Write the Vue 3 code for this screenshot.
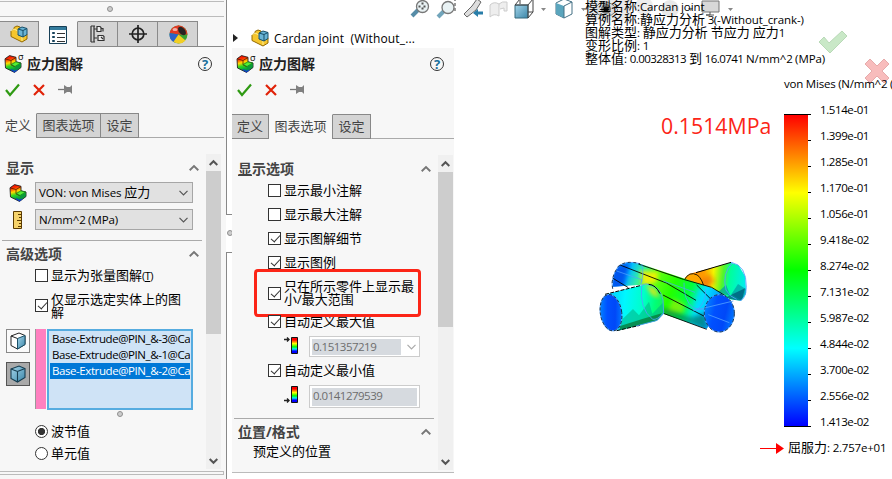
<script setup>
const treeTabs = ['part', 'list', 'config', 'target', 'ball']
const pages = ['定义', '图表选项', '设定']
const entities = ['Base-Extrude@PIN_&-3@Ca', 'Base-Extrude@PIN_&-1@Ca', 'Base-Extrude@PIN_&-2@Ca']
const options = [
  { text: '显示最小注解', on: false },
  { text: '显示最大注解', on: false },
  { text: '显示图解细节', on: true },
  { text: '显示图例', on: true }
]
const legend = ['1.514e-01', '1.399e-01', '1.285e-01', '1.170e-01', '1.056e-01', '9.418e-02', '8.274e-02', '7.131e-02', '5.987e-02', '4.844e-02', '3.700e-02', '2.556e-02', '1.413e-02']
const info = ['模型名称:Cardan joint', '算例名称:静应力分析 3(-Without_crank-)', '图解类型: 静应力分析 节应力 应力1', '变形比例: 1', '整体值: 0.00328313 到 16.0741 N/mm^2 (MPa)']

// Splits mixed text so that Han characters, numbers and Latin each get their own size.
const runs = (text) => (text.match(/[\u4e00-\u9fff]+|[\d.]+|[^\u4e00-\u9fff\d.]+/g) || []).map((t) => ({
  t,
  kind: /[\u4e00-\u9fff]/.test(t) ? 'han' : /\d/.test(t) ? 'num' : 'lat'
}))
</script>

<template>
  <div class="app">
    <svg class="defs" width="0" height="0">
      <defs>
        <linearGradient id="rain" gradientUnits="userSpaceOnUse" x1="4" y1="0" x2="9" y2="18">
          <stop offset="0" stop-color="#e80000" /><stop offset=".22" stop-color="#ff3000" /><stop offset=".42" stop-color="#ffd800" /><stop offset=".6" stop-color="#30d820" /><stop offset=".82" stop-color="#00a040" /><stop offset="1" stop-color="#0040d0" />
        </linearGradient>
        <linearGradient id="bar" x1="0" y1="0" x2="0" y2="1">
          <stop offset="0" stop-color="#f00" /><stop offset=".15" stop-color="#f00" /><stop offset=".38" stop-color="#ff0" /><stop offset=".58" stop-color="#0f0" /><stop offset=".72" stop-color="#0ef" /><stop offset=".85" stop-color="#00f" /><stop offset="1" stop-color="#00f" />
        </linearGradient>
        <linearGradient id="blue" x1="0" y1="0" x2="1" y2="1">
          <stop offset="0" stop-color="#a5d5ea" /><stop offset="1" stop-color="#3b86a8" />
        </linearGradient>
        <symbol id="stress" viewBox="0 0 18 18">
          <path d="M1 3.800 5.500.600 12 2.300V6.800L17 8v4.500L10.500 17.400 1.500 13Z" fill="url(#rain)" stroke="#222" stroke-width=".9" />
          <path d="M1.500 4 7 5.500 12 2.500M7 5.500V9.800L11 11.800" fill="none" stroke="#5a1a00" stroke-width=".8" />
          <path d="m7.300 9.500 4.500-2.600L16.500 8 11 11.500Z" fill="#54f035" stroke="#117a18" stroke-width=".7" />
          <path d="M11 12 16.600 8.500V12.200L10.700 16.800Z" fill="#0b9a3a" />
          <path d="M7 14.500 10.500 16.800 13 15" fill="none" stroke="#1240c8" stroke-width="1.300" />
        </symbol>
        <symbol id="part" viewBox="0 0 18 18">
          <path d="M1 6 4 4V2.500L7 1l3 1v4l7 3v5l-5 3L1 11.500Z" fill="#f5c62d" stroke="#946a00" />
          <path d="m1 6 3-2 4 2v3l4 2v5" fill="none" stroke="#fff09a" />
          <path d="M8 4 12 2l5 1.500v6L13 12 8 10Z" fill="#69b4d5" stroke="#164e69" />
          <path d="M8 4 13 5.500 17 3.500M13 5.500V12" fill="none" stroke="#164e69" />
        </symbol>
        <symbol id="cube" viewBox="0 0 18 18">
          <path d="M2 4 10 1l6 2.500v9L8.500 17 2 13.500Z" fill="url(#blue)" stroke="#163d50" stroke-width="1.100" />
          <path d="m2 4 6.500 2.500L16 3.500M8.500 6.500V17" fill="none" stroke="#163d50" stroke-width="1.100" />
        </symbol>
      </defs>
    </svg>

    <aside class="left">
      <header class="grip"><i class="dot"></i></header>
      <nav class="treetabs">
        <div v-for="t in treeTabs" :key="t" class="treetab" :class="{ active: t === 'list' }">
          <svg v-if="t === 'part'" width="18" height="18"><use href="#part" /></svg>
          <svg v-else-if="t === 'list'" width="18" height="18" viewBox="0 0 18 18">
            <path d="M.5.500h17v17H.5Z" fill="#fff" stroke="#173f56" /><path d="M1 1h16v3H1Z" fill="#337b9c" />
            <g fill="#70b9d6" stroke="#173f56"><path d="M3.500 6.500h2v1h-2ZM3.500 10.500h2v1h-2ZM3.500 14.500h2v1h-2Z" /></g>
            <path d="M8 7.500h8M8 11.500h8M8 15.500h8" stroke="#333" />
          </svg>
          <svg v-else-if="t === 'config'" width="16" height="18" viewBox="0 0 16 18" fill="none" stroke="#333" stroke-width="1.200">
            <path d="M1 1h4M1 17h4M1 1v16M4 1v16M4 4h3M4 13h3" /><path d="M7 1.500h3l1 1v4H7ZM8 10.500h5l1 1v4H8Z" fill="#eee" /><path d="M11 3.500h2v3M11 12l2 2" />
          </svg>
          <svg v-else-if="t === 'target'" width="18" height="18" viewBox="0 0 18 18" fill="none" stroke="#222" stroke-width="1.700">
            <circle cx="9" cy="9" r="5.800" /><path d="M9 0v18M0 9h18" />
          </svg>
          <svg v-else width="19" height="19" viewBox="0 0 19 19">
            <circle cx="9.500" cy="9.500" r="9" fill="#39a332" /><path d="M9.500 9.500.6 8A9 9 0 0 1 10 .500Z" fill="#e23a25" /><path d="M9.500 9.500.6 8a9 9 0 0 0 5 9.500Z" fill="#2a62c9" /><path d="m9.500 9.500-5 7.300a9 9 0 0 0 12-1.300Z" fill="#f2ce24" /><path d="M9 .5a9 9 0 0 1 9.500 9l-9 0Z" fill="#d83b22" /><ellipse cx="13" cy="6" rx="3" ry="5" transform="rotate(-40 13 6)" fill="#272323" /><ellipse cx="6" cy="4.500" rx="2.500" ry="1.500" fill="#fff" opacity=".6" />
          </svg>
        </div>
        <span class="rest"></span>
      </nav>
      <div class="title">
        <svg width="18" height="18"><use href="#stress" /></svg><sup>σ</sup><b>应力图解</b><span class="help">?</span>
      </div>
      <div class="actions">
        <svg width="70" height="14" viewBox="0 0 70 14" fill="none"><path d="m1 7 4 5L14 1.500" stroke="#2f9a13" stroke-width="2.200" /><path d="m29 2 10 10M39 2 29 12" stroke="#e02208" stroke-width="2.200" /><path d="M53 6.500h6" stroke="#777" stroke-width="1.300" /><path d="M59 2v9l3-2h3l2 2V2l-2 2h-3Z" fill="#808080" /></svg>
      </div>
      <nav class="pages"><span v-for="(p, i) in pages" :key="p" :class="{ on: i === 0 }">{{ p }}</span><i></i></nav>
      <div class="scrollarea">
        <div class="content">
          <h3 class="h-show">显示<svg class="chev" width="10" height="6" viewBox="0 0 10 6"><path d="m.7 5.300 4.300-4.200 4.300 4.200" /></svg></h3>
          <div class="combo-row"><svg width="18" height="18"><use href="#stress" /></svg>
            <div class="combo"><div><span v-for="(r, i) in runs('VON: von Mises 应力')" :key="i" :class="r.kind">{{ r.t }}</span></div><svg width="9" height="6" viewBox="0 0 9 6"><path d="m.5.800 4 4 4-4" /></svg></div></div>
          <div class="combo-row second"><svg width="18" height="18" viewBox="0 0 18 18"><path d="M4.500.500h8v17h-8Z" fill="#f6d36b" stroke="#5b3b00" /><path d="M9 3.500h3M10 6.500h2M8 9.500h4M10 12.500h2M9 15.500h3" stroke="#5b3b00" /></svg>
            <div class="combo"><div><span v-for="(r, i) in runs('N/mm^2 (MPa)')" :key="i" :class="r.kind">{{ r.t }}</span></div><svg width="9" height="6" viewBox="0 0 9 6"><path d="m.5.800 4 4 4-4" /></svg></div></div>
          <hr>
          <h3 class="h-adv">高级选项<svg class="chev" width="10" height="6" viewBox="0 0 10 6"><path d="m.7 5.300 4.300-4.200 4.300 4.200" /></svg></h3>
          <label class="opt tensor"><span class="box"></span><span>显示为张量图解<small>(<u>T</u>)</small></span></label>
          <label class="opt bodies"><span class="box on"></span><span>仅显示选定实体上的图<br>解</span></label>
          <div class="picker">
            <div class="filters">
              <span><svg width="18" height="18" viewBox="0 0 18 18"><path d="M2 4 10 1l6 2.500v9L8.500 17 2 13.500Z" fill="#fff" stroke="#222" /><path d="M8.500 6.500 16 3.500v9L8.500 17Z" fill="url(#blue)" stroke="#1b5068" /><path d="m2 4 6.500 2.500" stroke="#222" /></svg></span>
              <span class="pressed"><svg width="18" height="18"><use href="#cube" /></svg></span>
            </div>
            <div class="pink"></div>
            <div class="list"><div v-for="(e, i) in entities" :key="e" :class="{ sel: i === 2 }">{{ e }}</div></div>
          </div>
          <div class="resize"><i class="dot"></i></div>
          <label class="radio"><i class="on"></i>波节值</label>
          <label class="radio"><i></i>单元值</label>
        </div>
        <div class="scroll"><svg width="9" height="6" viewBox="0 0 9 6"><path d="m.7 5 3.800-3.800L8.300 5" /></svg><div class="thumb"></div><svg class="down" width="9" height="6" viewBox="0 0 9 6"><path d="m.7 1 3.800 3.800L8.300 1" /></svg></div>
      </div>
      <footer class="foot"></footer>
    </aside>

    <div class="strip"><div class="seg-a"></div><i class="dot"></i><div class="seg-b"></div></div>

    <section class="middle">
      <div class="flyout"><svg class="tri" width="5" height="8" viewBox="0 0 5 8"><path d="m0 0 5 4-5 4Z" fill="#222" /></svg><svg width="18" height="18"><use href="#part" /></svg><span>Cardan joint&nbsp; (Without_...</span></div>
      <div class="panel">
        <div class="title">
          <svg width="18" height="18"><use href="#stress" /></svg><sup>σ</sup><b>应力图解</b><span class="help">?</span>
        </div>
        <div class="actions">
          <svg width="70" height="14" viewBox="0 0 70 14" fill="none"><path d="m1 7 4 5L14 1.500" stroke="#2f9a13" stroke-width="2.200" /><path d="m29 2 10 10M39 2 29 12" stroke="#e02208" stroke-width="2.200" /><path d="M53 6.500h6" stroke="#777" stroke-width="1.300" /><path d="M59 2v9l3-2h3l2 2V2l-2 2h-3Z" fill="#808080" /></svg>
        </div>
        <nav class="pages"><span v-for="(p, i) in pages" :key="p" :class="{ on: i === 1 }">{{ p }}</span><i></i></nav>
        <div class="scrollarea">
          <div class="content">
            <h3 class="h-opt"><span><u>显</u>示选项</span><svg class="chev" width="10" height="6" viewBox="0 0 10 6"><path d="m.7 5.300 4.300-4.200 4.300 4.200" /></svg></h3>
            <label v-for="o in options" :key="o.text" class="opt line"><span class="box" :class="{ on: o.on }"></span>{{ o.text }}</label>
            <label class="opt range"><span class="box on"></span><span>只在所示零件上显示最<br>小/最大范围</span><em class="mark"></em></label>
            <label class="opt line"><span class="box on"></span>自动定义最大值</label>
            <div class="limit"><svg width="16" height="19" viewBox="0 0 16 19"><path d="M7.500 1.500h6v16h-6Z" fill="url(#bar)" stroke="#111" /><path d="M0 3.500h5M3 1.500l2 2-2 2" fill="none" stroke="#222" stroke-width="1.400" /></svg><div class="field drop"><span>0.151357219</span><svg width="9" height="6" viewBox="0 0 9 6"><path d="m.5.800 4 4 4-4" /></svg></div></div>
            <label class="opt line"><span class="box on"></span>自动定义最小值</label>
            <div class="limit low"><svg width="16" height="19" viewBox="0 0 16 19"><path d="M7.500 1.500h6v16h-6Z" fill="url(#bar)" stroke="#111" /><path d="M0 15.500h5M3 13.500l2 2-2 2" fill="none" stroke="#222" stroke-width="1.400" /></svg><div class="field"><span>0.0141279539</span></div></div>
            <hr>
            <h3 class="h-pos"><span><u>位</u>置/格式</span><svg class="chev" width="10" height="6" viewBox="0 0 10 6"><path d="m.7 5.300 4.300-4.200 4.300 4.200" /></svg></h3>
            <p>预定义的位置</p>
          </div>
          <div class="scroll"><svg width="9" height="6" viewBox="0 0 9 6"><path d="m.7 5 3.800-3.800L8.300 5" /></svg><div class="thumb"></div><svg class="down" width="9" height="6" viewBox="0 0 9 6"><path d="m.7 1 3.800 3.800L8.300 1" /></svg></div>
        </div>
      </div>
    </section>

    <main class="view">
      <div class="info"><div v-for="t in info" :key="t"><span v-for="(r, i) in runs(t)" :key="i" :class="r.kind">{{ r.t }}</span></div></div>
      <div class="stage">
        <div class="scene">
          <div class="value">0.1514MPa</div>
          <svg class="model" width="170" height="90" viewBox="0 0 510 270">
            <defs>
              <linearGradient id="gr" x1="0" y1=".2" x2="1" y2=".3"><stop offset="0" stop-color="#ffb000" /><stop offset=".18" stop-color="#ff8a00" /><stop offset=".35" stop-color="#ffa000" /><stop offset=".48" stop-color="#f5f500" /><stop offset=".62" stop-color="#52f52b" /><stop offset=".72" stop-color="#00ff9c" /><stop offset="1" stop-color="#00e8ff" /></linearGradient>
              <linearGradient id="gl" gradientUnits="userSpaceOnUse" x1="70" y1="70" x2="385" y2="205"><stop offset="0" stop-color="#006fff" /><stop offset=".12" stop-color="#00bcff" /><stop offset=".22" stop-color="#37f0a0" /><stop offset=".34" stop-color="#6cff18" /><stop offset=".53" stop-color="#24ff00" /><stop offset=".68" stop-color="#00ff40" /><stop offset=".8" stop-color="#00e4ff" /><stop offset="1" stop-color="#0080ff" /></linearGradient>
              <linearGradient id="gf" x1="0" y1="0" x2="1" y2=".1"><stop offset="0" stop-color="#00bcff" /><stop offset=".35" stop-color="#00f7ff" /><stop offset=".65" stop-color="#00ffc8" /><stop offset=".85" stop-color="#00ff76" /><stop offset="1" stop-color="#17ef56" /></linearGradient>
              <linearGradient id="end" x1="0" y1=".3" x2="1" y2=".6"><stop offset="0" stop-color="#0088ff" /><stop offset=".35" stop-color="#0050ff" /><stop offset=".7" stop-color="#0048f8" /><stop offset="1" stop-color="#0078ff" /></linearGradient>
              <filter id="soft"><feGaussianBlur stdDeviation="7" /></filter>
              <clipPath id="cr"><path d="M283 85 300 71 420 38 445 45 465 78 469 130 453 152 340 138 315 178 285 130Z" /></clipPath>
              <clipPath id="cl"><path d="M68 110 72 72 88 47 115 36 150 41 365 113 410 139 350 237 220 191 155 104Z" /></clipPath>
              <clipPath id="cf"><path d="M48 133 150 107 178 102 202 114 220 150 221 191 200 212 80 243 95 190 78 143Z" /></clipPath>
            </defs>
            <g clip-path="url(#cr)">
              <path d="M270 25h210v160H270Z" fill="url(#gr)" /><path d="M357 70 376 92 345 125 335 92Z" fill="#f04a10" opacity=".5" filter="url(#soft)" /><path d="m385 126 23-22 14 35ZM424 133l20-31 24 16v42Z" fill="#009ca2" opacity=".7" /><path d="m405 143 60-28-10 40Z" fill="#004a72" opacity=".65" />
            </g>
            <path d="M318 68 423 37" fill="none" stroke="#000" stroke-width="3" />
            <path d="M423 37Q470 45 469 112 467 148 450 152M428 38Q395 70 408 120 418 140 440 148" fill="none" stroke="#50a0ff" stroke-width="2.600" />
            <path d="M283 90Q297 62 322 75 346 97 344 145L300 130Z" fill="#ffa600" stroke="none" /><path d="M283 90Q297 62 322 75 338 88 344 120" fill="none" stroke="#000" stroke-width="2.500" />
            <g clip-path="url(#cl)">
              <path d="M60 20h360v230H60Z" fill="url(#gl)" /><path d="M65 55 120 37 100 115 65 125Z" fill="#0057ef" filter="url(#soft)" /><path d="M150 62 205 67 200 95 160 108Z" fill="#fff000" filter="url(#soft)" opacity=".9" /><path d="M250 145 286 162 278 192 231 188Z" fill="#b5ec00" filter="url(#soft)" opacity=".6" /><path d="M325 118 350 125 339 185 315 175Z" fill="#00d9ff" opacity=".7" filter="url(#soft)" /><path d="M215 172 300 202 347 190 349 238 220 194Z" fill="#006a50" opacity=".6" filter="url(#soft)" />
            </g>
            <path d="M68 116Q61 84 85 49 107 30 150 41" fill="none" stroke="#50a0ff" stroke-width="3" /><path d="M68 116Q61 84 85 49 107 30 150 41" fill="none" stroke="#000" stroke-width="2" stroke-dasharray="9 8" />
            <path d="M145 42 280 88 365 112 407 138M220 190 350 238M90 45 229 99 318 151M69 85 115 113M219 135 355 205M320 105 360 145" fill="none" stroke="#000" stroke-width="2.600" />
            <path d="M80 63 155 89Q153 146 105 149M155 43Q162 62 155 95M220 93 315 127M282 98Q280 150 310 174L340 179M347 115Q350 157 320 181" fill="none" stroke="#50a0ff" stroke-width="2.200" />
            <g clip-path="url(#cf)">
              <path d="M45 95h185v155H45Z" fill="url(#gf)" /><path d="m165 102 32 12 12 31-25-11Z" fill="#ffe500" opacity=".8" filter="url(#soft)" /><path d="m94 211 35-34 18 19 30-41 10 36 34-35v51L87 243Z" fill="#00b98b" opacity=".6" /><path d="m88 229 69-22 58-17-12 35-110 19Z" fill="#087737" opacity=".75" />
            </g>
            <path d="M45 133 150 107M80 242 150 226" fill="none" stroke="#000" stroke-width="3" stroke-dasharray="12 4" />
            <path d="M155 106Q166 98 181 104 213 114 219 150L221 190 202 211 139 228M155 106Q147 177 188 208 202 211 221 188" fill="none" stroke="#50a0ff" stroke-width="2.500" />
            <path d="M176 103Q197 104 210 131" fill="none" stroke="#000" stroke-width="3" />
            <ellipse cx="63" cy="188" rx="32" ry="55" transform="rotate(-9 63 188)" fill="url(#end)" stroke="#50a0ff" stroke-width="3" /><ellipse cx="63" cy="188" rx="32" ry="55" transform="rotate(-9 63 188)" fill="none" stroke="#000" stroke-width="2" stroke-dasharray="9 6" />
            <ellipse cx="388" cy="190" rx="45" ry="56" fill="url(#end)" stroke="#50a0ff" stroke-width="3" /><ellipse cx="388" cy="190" rx="45" ry="56" fill="none" stroke="#000" stroke-width="2" stroke-dasharray="10 7" />
            <path d="M310 182 430 153M355 194 418 218" fill="none" stroke="#50a0ff" stroke-width="2.500" />
          </svg>
        </div>
        <div class="legend">
          <div class="unit">von Mises (N/mm^2 (</div>
          <div class="scale">
            <div class="ramp"></div>
            <div class="ticks"><i v-for="l in legend" :key="l"></i></div>
            <div class="labels"><span v-for="l in legend" :key="l">{{ l }}</span></div>
          </div>
          <div class="yield"><svg width="24" height="11" viewBox="0 0 24 11"><path d="M0 5.500h17" stroke="red" /><path d="m16 0 8 5.500-8 5.500Z" fill="red" /></svg><div><span v-for="(r, i) in runs('屈服力: 2.757e+01')" :key="i" :class="r.kind">{{ r.t }}</span></div></div>
        </div>
      </div>
      <svg class="toolbar" width="330" height="20" viewBox="0 0 330 20">
        <g fill="#e9f2f4" stroke="#777" stroke-width="1.300">
          <path d="m1 16 6-6" stroke="#568ca7" stroke-width="4" /><circle cx="11.500" cy="6.500" r="6" /><path d="M11.500 2.500v8M7.500 6.500h8" stroke="#555" stroke-dasharray="2 3" stroke-width="2" />
          <path d="M28-1h16v14" fill="none" stroke-dasharray="3 2" stroke="#666" /><path d="m27 17 6-6" stroke="#72a5bb" stroke-width="4" /><circle cx="37" cy="7.500" r="6" />
        </g>
        <path d="m53 14 8-8 5-7 4 3-5 8-9 7Z" fill="#ddd" stroke="#666" /><path d="m62 13 5-4v2.500h5v3h-5V17Z" fill="#287da8" />
        <path d="M79 5q4-4 9-1v12q-5-3-9 1ZM88 4q3-3 8-2v9h-3v-3l-4 1" fill="#eee" stroke="#ccc" />
        <path d="M104 5h13v13h-13Z" fill="url(#blue)" stroke="#35687c" /><path d="m104 5 5-6h13v13l-5 6M104 5h13v13M117 5l5-6M109-1v5M117 12h5" fill="none" stroke="#444" />
        <path d="M130 8h5l-2.500 3ZM170 8h5l-2.500 3ZM237 8h5l-2.500 3ZM277 8h5l-2.500 3ZM317 8h5l-2.500 3Z" fill="#888" />
        <path d="m145 3 8-4 8 3v12l-8 4-8-4Z" fill="#fff" stroke="#447185" /><path d="m145 3 8 3v12l-8-4Z" fill="#5aa5bd" /><path d="m153 6 8-4M153 6v12" stroke="#447185" />
        <path d="M176 0h44v20h-44Z" fill="#e4e4e4" opacity=".8" /><path d="M182 10q12-16 25 0-13 13-25 0Z" fill="#ddd" stroke="#777" /><circle cx="195" cy="9" r="5" fill="#777" /><circle cx="195" cy="9" r="2.500" fill="#111" />
        <circle cx="233" cy="6" r="9" fill="#e6e6e6" opacity=".7" /><circle cx="259" cy="9" r="9" fill="#dedede" opacity=".7" /><path d="M291 1h17v11h-17Z" fill="#d8d8d8" stroke="#777" /><path d="M299 12v3h-4h8" stroke="#555" fill="none" />
      </svg>
      <svg class="confirm" width="74" height="54" viewBox="0 0 74 54"><path d="m1 12 5-5 5 6L24 1l5 5-17 17Z" fill="#c9e8c7" stroke="#b9d9b7" /><path d="m47 34 5-5 7 7 7-7 5 5-7 7 7 7-5 5-7-7-7 7-5-5 7-7Z" fill="#f8bcbc" stroke="#e6aaaa" /></svg>
    </main>
  </div>
</template>

<style>
html, body { margin: 0; overflow: hidden; }
</style>
<style scoped>
* { box-sizing: border-box; }
.app { display: flex; width: 892px; height: 479px; background: #fff; overflow: hidden; color: #000; font: 12px/16px "Open Sans", "Noto Sans CJK SC", sans-serif; white-space: nowrap; }
svg { flex: none; display: block; overflow: visible; }
.han { font-size: 13px; }
.num { font-size: 11.500px; letter-spacing: -.6px; white-space: pre; }
.lat { font-size: 11.500px; letter-spacing: -.1px; white-space: pre; }
.defs { position: absolute; }
.dot { display: block; flex: none; width: 6px; height: 6px; border-radius: 50%; border: 1px solid #909090; background: #ccc; }
.left { width: 226px; height: 479px; flex: none; background: #f7f7f7; display: flex; flex-direction: column; }
.grip { width: 224px; height: 16px; margin-top: 1px; border-top: 1px solid #bbb; border-bottom: 1px solid #bbb; padding: 4px 0 0 107px; }
.treetabs { height: 26px; margin-top: 4px; display: flex; width: 224px; }
.treetab { width: 40px; background: #d4d4d4; border: 1px solid #8a8a8a; border-left: 0; display: grid; place-items: center; }
.treetab:first-child, .treetab.active { width: 39px; }
.treetab.active { background: #f7f7f7; border-bottom: 0; border-top-color: #f7f7f7; }
.treetab:nth-child(n+3) { padding-left: 1px; }
.rest { flex: 1; border-bottom: 1px solid #8a8a8a; }
.title { height: 34px; display: flex; align-items: center; padding: 0 0 1px 4px; }
.title sup { width: 5px; margin: -13px 0 0 -4px; font-size: 9px; line-height: 10px; }
.title b { margin-left: 4px; font-size: 14px; color: #222; }
.help { width: 14px; height: 14px; margin-left: auto; margin-right: 14px; border: 1px solid #333; border-radius: 50%; color: #1a6f9b; font-size: 13px; font-weight: 700; line-height: 12px; text-align: center; }
.actions { height: 20px; padding: 2px 0 0 5px; }
.pages { display: flex; height: 25px; margin-top: 12px; width: 224px; color: #444; font-size: 13px; }
.pages span { height: 25px; width: 38px; background: #d4d4d4; border: 1px solid #888; border-left: 0; line-height: 22px; text-align: center; }
.pages span:first-child { width: 37px; }
.pages span:nth-child(2) { width: 64px; }
.pages span.on { background: #f7f7f7; border-bottom: 0; border-top-color: #f7f7f7; }
.pages i { flex: 1; border-bottom: 1px solid #aaa; }
.scrollarea { display: flex; margin-top: 16px; height: 316px; }
.content { width: 206px; flex: none; }
h3 { margin: 0; height: 20px; width: 199px; padding-left: 6px; font-size: 14px; line-height: 20px; color: #444; display: flex; align-items: center; justify-content: space-between; font-weight: 700; }
.chev path { fill: none; stroke: #777; stroke-width: 1.900; }
.h-show { margin-top: 4px; }
.combo-row { display: flex; align-items: center; height: 21px; margin-top: 4px; padding-left: 9px; gap: 8px; }
.combo-row.second { margin-top: 6px; }
.combo { width: 158px; height: 21px; border: 1px solid #a6a6a6; background: #e1e1e1; display: flex; justify-content: space-between; align-items: center; padding: 0 4px 0 3px; }
.combo path, .drop path { fill: none; stroke: #555; stroke-width: 1.200; }
hr { margin: 10px 0 0 2px; width: 200px; border: 0; height: 1px; background: #aaa; }
.h-adv { margin-top: 3px; }
.opt { display: flex; align-items: center; gap: 3px; font-size: 13px; line-height: 13px; }
.opt small { font-size: 11px; letter-spacing: -.5px; }
.box { flex: none; width: 13px; height: 13px; background: #fff; border: 1px solid #333; position: relative; }
.box.on::after { content: ""; position: absolute; left: 1.500px; top: 2px; width: 8px; height: 4px; border-left: 1.300px solid #333; border-bottom: 1.300px solid #333; transform: rotate(-48deg); }
.tensor { margin: 3px 0 0 35px; height: 16px; }
.bodies { margin: 9px 0 0 35px; height: 27px; }
.picker { display: flex; height: 81px; margin-top: 10px; padding-left: 6px; }
.filters { width: 29px; display: flex; flex-direction: column; gap: 9px; }
.filters span { width: 24px; height: 24px; border: 1px solid #888; background: #fafafa; display: grid; place-items: center; }
.filters .pressed { background: #a9a9a9; border-color: #555; }
.pink { width: 11px; height: 80px; background: #ff80c0; border-left: 1px solid #999; margin-right: 1px; }
.list { width: 146px; height: 81px; border: 2px solid #56ace0; background: #cfe3f6; padding: 0 1px 1px; overflow: hidden; font-size: 11.500px; letter-spacing: -.42px; }
.list div { padding-left: 2px; height: 16px; overflow: hidden; }
.list .sel { color: #fff; background: #0078d7; }
.resize { height: 10px; padding: 1px 0 0 117px; }
.radio { display: flex; align-items: center; height: 22px; padding-left: 35px; gap: 3px; font-size: 13px; }
.radio i { width: 13px; height: 13px; border: 1px solid #333; border-radius: 50%; background: #fff; }
.radio i.on { background: radial-gradient(circle, #333 3.200px, #fff 4px); }
.scroll { width: 15px; height: 315px; background: #f0f0f0; display: flex; flex-direction: column; align-items: center; padding: 6px 0 5px; }
.scroll path { fill: none; stroke: #555; stroke-width: 2; }
.thumb { width: 15px; height: 163px; background: #cdcdcd; margin-top: 5px; }
.down { margin-top: auto; }
.foot { width: 224px; height: 4px; margin-top: 1px; border: 1px solid #bbb; border-left: 0; }
.strip { width: 6px; flex: none; height: 479px; }
.seg-a { height: 215px; border-left: 1px solid #888; border-bottom: 1px solid #888; }
.strip .dot { margin: 15px 0 0 1px; }
.seg-b { height: 227px; margin-top: 16px; border-left: 1px solid #888; border-top: 1px solid #888; }
.middle { width: 222px; flex: none; }
.flyout { height: 48px; padding: 27px 0 0 1px; display: flex; align-items: center; font-size: 12px; }
.flyout .tri { margin-right: 13px; }
.flyout span { margin-left: 5px; letter-spacing: .13px; padding-top: 3px; }
.panel { height: 425px; background: #f7f7f7; border-bottom: 1px solid #bbb; overflow: hidden; }
.panel .title { height: 33px; }
.panel .help { margin-right: 10px; }
.panel .pages { margin-top: 13px; width: 222px; }
.panel .thumb { height: 155px; }
.h-opt { margin-top: 4px; }
.opt.line { height: 24px; padding-left: 36px; }
.h-opt + .opt { margin-top: -1px; }
.range { height: 35px; padding: 3px 0 0 36px; position: relative; }
.mark { position: absolute; left: 22px; top: -5px; width: 167px; height: 48px; border: 3px solid #fc2517; border-radius: 4px; }
.limit { display: flex; height: 21px; padding-left: 52px; gap: 9px; margin: 3px 0 1px; }
.field { width: 111px; height: 21px; border: 1px solid #ccc; color: #6d6d6d; padding: 2px; background: #fff; display: flex; align-items: center; font-size: 11.500px; letter-spacing: -.5px; }
.field span { width: 105px; height: 16px; padding-left: 1px; background: #d6dadf; }
.drop span { width: 89px; margin-right: 6px; }
.drop path { stroke: #aaa; }
.low .field { height: 23px; }
.low .field span { height: 18px; }
.panel hr { margin-top: 12px; }
.h-pos { margin-top: 3px; }
p { margin: 0 0 0 21px; font-size: 13px; line-height: 18px; }
.view { width: 438px; height: 479px; flex: none; position: relative; }
.info { height: 72px; padding-left: 131px; line-height: 13px; position: relative; z-index: 1; }
.info div { height: 13px; }
.stage { display: flex; }
.scene { width: 306px; }
.value { margin: 39px 0 0 207px; height: 30px; font-size: 21.300px; line-height: 30px; color: #fc2517; }
.model { margin: 109px 0 0 136px; }
.legend { width: 132px; padding-top: 4px; }
.unit { padding-left: 24px; font-size: 11.500px; letter-spacing: -.22px; height: 16px; position: relative; z-index: 1; }
.scale { display: flex; height: 334px; margin-left: 24px; }
.ramp { width: 24px; height: 313px; margin-top: 22px; border-top: 1px solid #000; border-bottom: 1px solid #000; background: linear-gradient(#f00, #ff0 25%, #0f0 50%, #0ff 75%, #00f); }
.ticks { width: 3px; height: 313px; margin-top: 22px; display: flex; flex-direction: column; justify-content: space-between; }
.ticks i { height: 1px; background: #000; }
.labels { margin: 5px 0 0 9px; font-size: 11.500px; letter-spacing: -.4px; }
.labels span { display: block; height: 26px; line-height: 26px; }
.yield { display: flex; align-items: center; gap: 4px; height: 20px; margin-top: 11px; }
.yield .num, .yield .lat { letter-spacing: -.2px; }
.yield svg { margin-top: 2px; }
.toolbar { position: absolute; left: -43px; top: 0; }
.confirm { position: absolute; left: 364px; top: 30px; }
</style>
